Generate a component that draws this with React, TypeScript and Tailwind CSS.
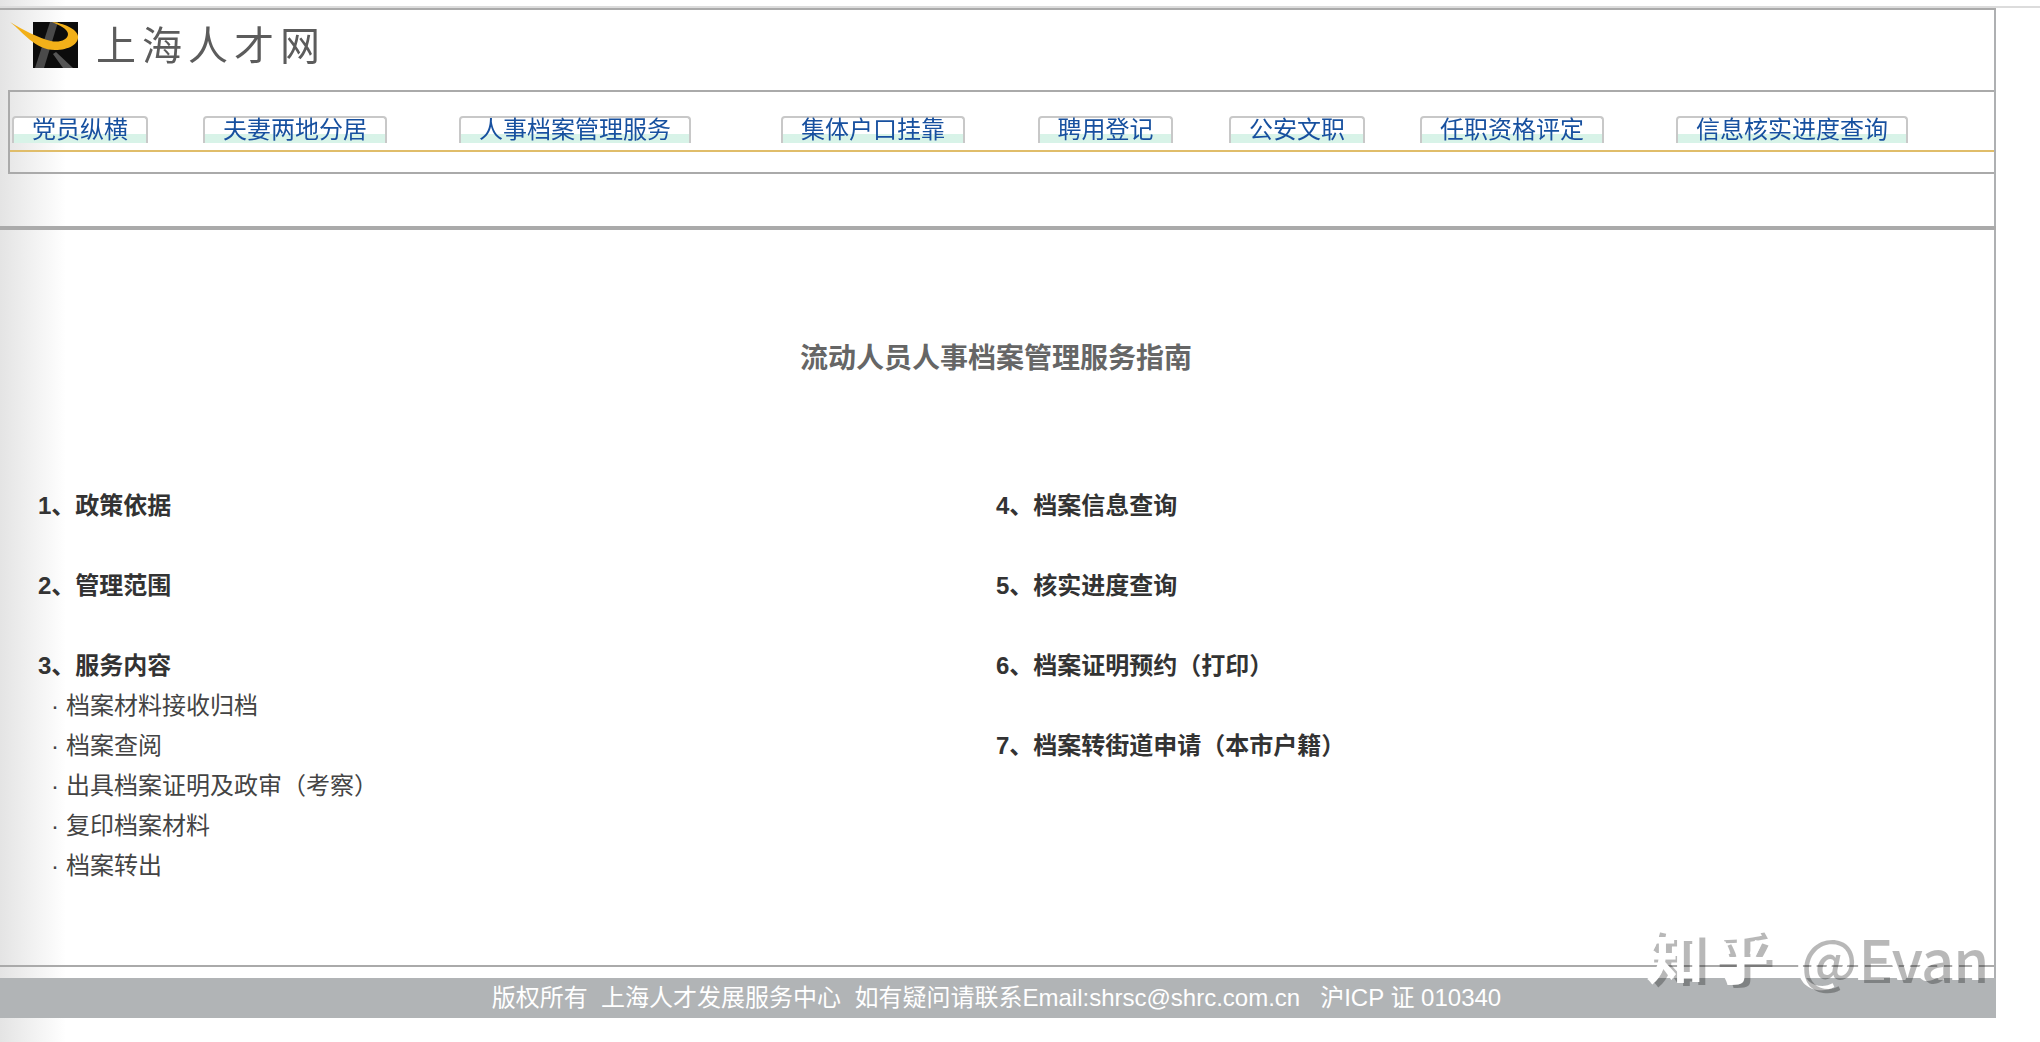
const tabs = [
  { t: "党员纵横", c: "w-[136px] ml-[2px]" },
  { t: "夫妻两地分居", c: "w-[184px] ml-[55px]" },
  { t: "人事档案管理服务", c: "w-[232px] ml-[72px]" },
  { t: "集体户口挂靠", c: "w-[184px] ml-[90px]" },
  { t: "聘用登记", c: "w-[135px] ml-[73px]" },
  { t: "公安文职", c: "w-[136px] ml-[56px]" },
  { t: "任职资格评定", c: "w-[184px] ml-[55px]" },
  { t: "信息核实进度查询", c: "w-[232px] ml-[72px]" },
];
const left = ["1、政策依据", "2、管理范围"];
const subs = ["档案材料接收归档", "档案查阅", "出具档案证明及政审（考察）", "复印档案材料", "档案转出"];
const right = ["4、档案信息查询", "5、核实进度查询", "6、档案证明预约（打印）", "7、档案转街道申请（本市户籍）"];
const font = "font-['Liberation_Sans','Noto_Sans_CJK_SC',sans-serif]";

function Logo() {
  return (
    <svg width="69" height="50" viewBox="-3 0 69 50" className="block blur-[0.6px]">
      <rect x="20" y="2" width="45" height="46" fill="#0c0c0c" />
      <path d="M37 2 L45 2 L31 48 L22 48 Z" fill="#4a4a4a" />
      <path d="M43 32 L60 48 L50 48 L40 34 Z" fill="#555" />
      <path d="M-3 2 C10 12 22 30 42 30 C56 30 66 24 65 16 C64 9 50 3 39 2 C46 5 55 9 55 14 C55 20 46 23 38 21 C26 18 10 10 -3 2 Z" fill="#f2b019" />
    </svg>
  );
}

export default function App() {
  return (
    <div className={`relative h-[1042px] w-full overflow-hidden bg-white ${font}`}>
      <div className="absolute inset-y-0 left-0 w-[66px] bg-gradient-to-r from-[#e4e4e4] to-white" />
      <div className="relative flex h-full flex-col pt-[6px]">
        <div className="h-[2px] bg-[#dcdcdc]" />
        <div className="flex w-[1996px] flex-1 flex-col">
          <div className="h-[2px] bg-[#aaaaaa]" />
          <div className="flex min-h-0 flex-1 flex-col border-r-2 border-[#aeb0b2]">
            <div className="flex h-[80px] items-start pl-[10px] pt-[10px]">
              <Logo />
              <span className="ml-[17px] mt-[2px] text-[40px] leading-[48px] tracking-[6px] text-[#5c5c5c] blur-[0.5px]">上海人才网</span>
            </div>
            <div className="ml-[8px] flex h-[84px] flex-col border-y-2 border-l-2 border-[#aaaaaa]">
              <div className="h-[24px] shrink-0" />
              <div className="flex h-[27px] shrink-0">
                {tabs.map((x) => (
                  <div
                    key={x.t}
                    className={`${x.c} flex h-[27px] shrink-0 justify-center rounded-t-[4px] border-x-2 border-t-2 border-[#c8c8c8] bg-gradient-to-b from-white from-[64%] to-[#d8f3e8] to-[64%] text-[24px] leading-[27px] text-[#17509f]`}
                  >
                    <span className="-mt-[2px] blur-[0.3px]">{x.t}</span>
                  </div>
                ))}
              </div>
              <div className="mt-[7px] h-[2px] shrink-0 bg-[#e0bd6a]" />
            </div>
            <div className="h-[52px] shrink-0" />
            <div className="-mr-[2px] h-[4px] shrink-0 bg-[#aaaaaa]" />
            <h1 className="mt-[109px] pr-[2px] text-center text-[28px] font-bold leading-[40px] text-[#666]">流动人员人事档案管理服务指南</h1>
            <div className="mt-[107px] grid grid-cols-[958px_1fr] pl-[38px] text-[24px] leading-[40px] text-[#444]">
              <div>
                {left.map((t) => (
                  <div key={t} className="mb-[40px] font-bold text-[#333]">{t}</div>
                ))}
                <div className="font-bold text-[#333]">3、服务内容</div>
                {subs.map((t) => (
                  <div key={t} className="flex h-[40px] items-center pl-[13px]">
                    <span className="w-[15px] leading-none">·</span>
                    <span>{t}</span>
                  </div>
                ))}
              </div>
              <div>
                {right.map((t) => (
                  <div key={t} className="mb-[40px] font-bold text-[#333]">{t}</div>
                ))}
              </div>
            </div>
            <div className="flex-1" />
            <div className="h-[2px] bg-[#aaaaaa]" />
            <div className="h-[11px]" />
          </div>
          <div className="flex h-[40px] items-center justify-center whitespace-pre bg-[#b1b4b6] pr-[3px] text-[24px] text-white">
            版权所有  上海人才发展服务中心  如有疑问请联系Email:shrsc@shrc.com.cn   沪ICP 证 010340
          </div>
          <div className="h-[24px]" />
        </div>
      </div>
      <div className="absolute left-[1646px] top-[917px] flex font-['Noto_Sans_CJK_SC',sans-serif] text-[58px] font-bold leading-[74px] text-[rgba(0,0,0,0.28)]">
        <span className="tracking-[7px] text-white [text-shadow:6px_3px_0_rgba(0,0,0,0.28)]">知乎</span>
        <div className="mt-[4px] flex font-medium [text-shadow:-6px_-3px_0_#ffffff]">
          <span className="ml-[25px]">@</span>
          <span className="ml-[1px] tracking-[-1px]">Evan</span>
        </div>
      </div>
    </div>
  );
}
